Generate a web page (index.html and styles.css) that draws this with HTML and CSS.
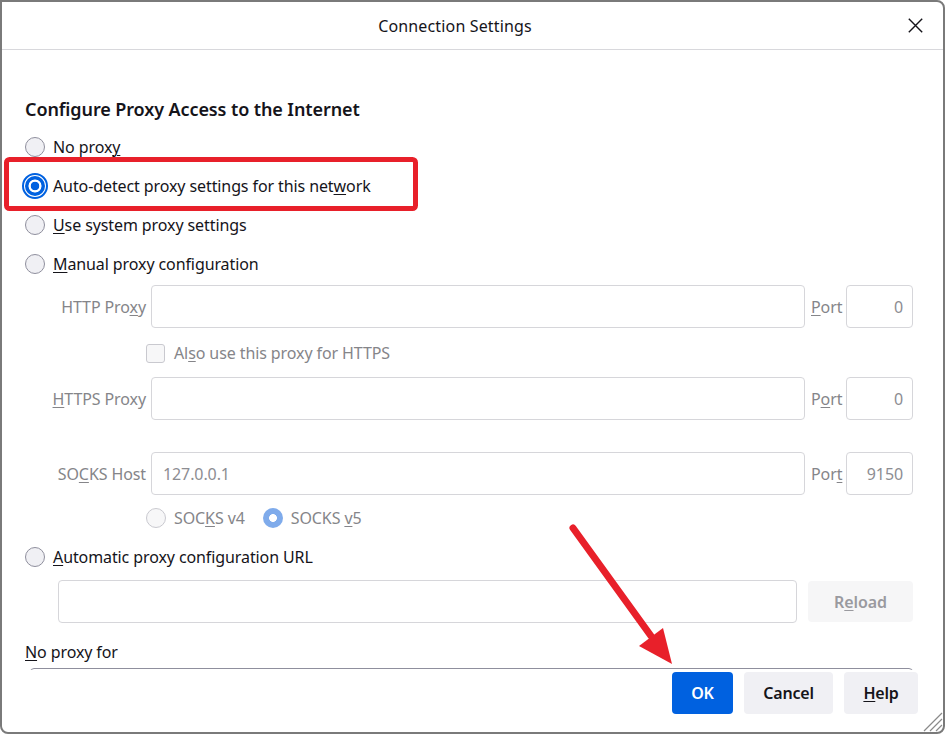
FILE: index.html
```html
<!DOCTYPE html>
<html lang="en">
<head>
<meta charset="utf-8">
<title>Connection Settings</title>
<link rel="stylesheet" href="styles.css">
</head>
<body>
<div class="dialog">
  <header class="titlebar">
    <div class="title">Connection Settings</div>
    <svg class="close" width="15" height="15" viewBox="0 0 15 15"><path d="M0.8 0.8L14.2 14.2M14.2 0.8L0.8 14.2" stroke="#15141a" stroke-width="1.4" fill="none"/></svg>
  </header>
  <main class="content">
    <h1 class="heading">Configure Proxy Access to the Internet</h1>
    <div class="radio-list">
      <div class="radio-row"><span class="radio"></span><span class="label">No prox<u>y</u></span></div>
      <div class="radio-row"><span class="radio checked"></span><span class="label">Auto-detect proxy settings for this net<u>w</u>ork</span></div>
      <div class="radio-row"><span class="radio"></span><span class="label"><u>U</u>se system proxy settings</span></div>
      <div class="radio-row"><span class="radio"></span><span class="label"><u>M</u>anual proxy configuration</span></div>
    </div>

    <div class="prow first">
      <span class="plabel">HTTP Pro<u>x</u>y</span>
      <span class="field"></span>
      <span class="portlabel"><u>P</u>ort</span>
      <span class="field port">0</span>
    </div>
    <div class="check-row">
      <span class="checkbox"></span><span class="dlabel">Al<u>s</u>o use this proxy for HTTPS</span>
    </div>
    <div class="prow">
      <span class="plabel"><u>H</u>TTPS Proxy</span>
      <span class="field"></span>
      <span class="portlabel">P<u>o</u>rt</span>
      <span class="field port">0</span>
    </div>
    <div class="prow socks">
      <span class="plabel">SO<u>C</u>KS Host</span>
      <span class="field host">127.0.0.1</span>
      <span class="portlabel">Por<u>t</u></span>
      <span class="field port">9150</span>
    </div>
    <div class="socks-row">
      <span class="radio disabled"></span><span class="dlabel v4">SOC<u>K</u>S v4</span>
      <span class="radio disabled-checked"></span><span class="dlabel">SOCKS <u>v</u>5</span>
    </div>
    <div class="radio-row auto"><span class="radio"></span><span class="label"><u>A</u>utomatic proxy configuration URL</span></div>
    <div class="url-row">
      <span class="field url"></span>
      <span class="reload">R<u>e</u>load</span>
    </div>
    <div class="noproxy"><u>N</u>o proxy for</div>
    <div class="textarea"></div>
  </main>
  <footer class="footer">
    <button class="btn primary">OK</button>
    <button class="btn cancel">Cancel</button>
    <button class="btn help"><u>H</u>elp</button>
  </footer>
  <svg class="overlay" width="945" height="734" viewBox="0 0 945 734">
    <rect x="6.5" y="159.5" width="409" height="49" rx="3" fill="none" stroke="#e8202a" stroke-width="5"/>
    <line x1="573" y1="528" x2="651" y2="636" stroke="#e8202a" stroke-width="7" stroke-linecap="round"/>
    <polygon points="639,646 663,628 672,664" fill="#e8202a"/>
  </svg>
  <svg class="grip" width="20" height="20" viewBox="0 0 20 20">
    <path d="M19 1L1 19M19 7L7 19M19 13L13 19" stroke="#8a8a8a" stroke-width="1.2" fill="none"/>
  </svg>
</div>
</body>
</html>
```

FILE: styles.css
```css
* { box-sizing: border-box; }
html, body { margin: 0; padding: 0; background: #ffffff; }
body {
  font-family: "Noto Sans", "Open Sans", sans-serif;
  font-size: 16px;
  color: #15141a;
  letter-spacing: -0.1px;
}
u { text-decoration-thickness: 1px; text-underline-offset: 2px; }

.dialog {
  width: 945px;
  height: 734px;
  border: 2px solid #7a7a7a;
  border-radius: 0 8px 8px 8px;
  background: #fff;
  position: relative;
  display: flex;
  flex-direction: column;
  overflow: hidden;
}

.titlebar {
  height: 48px;
  flex: none;
  display: flex;
  align-items: center;
  padding-right: 20px;
  border-bottom: 1px solid #d8d8dc;
}
.title {
  flex: 1;
  text-align: center;
  font-size: 16px;
  letter-spacing: 0.15px;
  line-height: 22px;
}
.close { display: block; flex: none; }

.content {
  flex: 1;
  overflow: hidden;
  padding-left: 23px;
}
.heading {
  margin: 47px 0 0;
  font-size: 18px;
  font-weight: 600;
  line-height: 24px;
  letter-spacing: -0.1px;
}
.radio-list { margin-top: 6px; }
.radio-row {
  height: 39px;
  display: flex;
  align-items: center;
  gap: 8px;
}
.label { line-height: 20px; }

.radio {
  width: 20px;
  height: 20px;
  flex: none;
  border-radius: 50%;
  border: 1px solid #8f8f9d;
  background: #f0f0f4;
}
.radio.checked {
  border: none;
  background: radial-gradient(circle, #0061e0 0 4px, #ffffff 4.6px 6.2px, #0061e0 6.8px);
  outline: 2px solid #0061e0;
  outline-offset: 1px;
}
.radio.disabled {
  border-color: #c9c9cf;
  background: #f7f7f8;
}
.radio.disabled-checked {
  border: none;
  background: radial-gradient(circle, #ffffff 0 3.6px, #7fabeb 4.2px);
}

.prow {
  display: grid;
  grid-template-columns: 126px 654px 41px 67px;
  height: 43px;
  align-items: center;
}
.prow.first { margin-top: 2px; }
.prow.socks { margin-top: 32px; }
.plabel {
  text-align: right;
  padding-right: 5px;
  color: #858589;
  white-space: nowrap;
}
.portlabel {
  padding-left: 6px;
  color: #858589;
}
.field {
  height: 43px;
  border: 1px solid #d6d6da;
  border-radius: 4px;
  background: #fff;
  display: flex;
  align-items: center;
  color: #8d8d92;
}
.field.port { justify-content: flex-end; padding-right: 9px; }
.field.host { padding-left: 11px; }

.check-row {
  height: 49px;
  display: flex;
  align-items: center;
  gap: 9px;
  padding-left: 121px;
  padding-top: 1px;
}
.checkbox {
  width: 19px;
  height: 19px;
  border: 1px solid #c9c9cf;
  border-radius: 3px;
  background: #f7f7f8;
}
.dlabel { color: #858589; line-height: 20px; }

.socks-row {
  height: 44px;
  display: flex;
  align-items: center;
  padding-left: 121px;
  padding-top: 1px;
}
.socks-row .dlabel { margin-left: 8px; }
.socks-row .dlabel.v4 { margin-right: 18px; }

.radio-row.auto { height: 36px; }

.url-row {
  display: flex;
  align-items: center;
  gap: 11px;
  margin-top: 5px;
  padding-left: 33px;
}
.field.url { width: 739px; }
.reload {
  width: 105px;
  height: 41px;
  border-radius: 4px;
  background: #f6f6f7;
  color: #9a9a9f;
  display: flex;
  align-items: center;
  justify-content: center;
  font-weight: 600;
}

.noproxy {
  margin-top: 18px;
  line-height: 22px;
}
.textarea {
  margin-top: 5px;
  margin-left: 5px;
  width: 883px;
  height: 80px;
  border: 1px solid #8f8f9d;
  border-radius: 4px;
}

.footer {
  flex: none;
  height: 62px;
  padding: 2px 25px 18px 0;
  display: flex;
  justify-content: flex-end;
  gap: 11px;
}
.btn {
  height: 42px;
  border: none;
  border-radius: 4px;
  font-family: "Noto Sans", "Open Sans", sans-serif;
  font-size: 16px;
  font-weight: 600;
  letter-spacing: -0.2px;
  padding: 0;
  color: #15141a;
  background: #f0f0f4;
}
.btn.primary { width: 61px; background: #0061e0; color: #fff; }
.btn.cancel { width: 89px; }
.btn.help { width: 74px; }

.overlay {
  position: absolute;
  left: -2px;
  top: -2px;
  pointer-events: none;
}
.grip {
  position: absolute;
  right: 0;
  bottom: 0;
}
```
